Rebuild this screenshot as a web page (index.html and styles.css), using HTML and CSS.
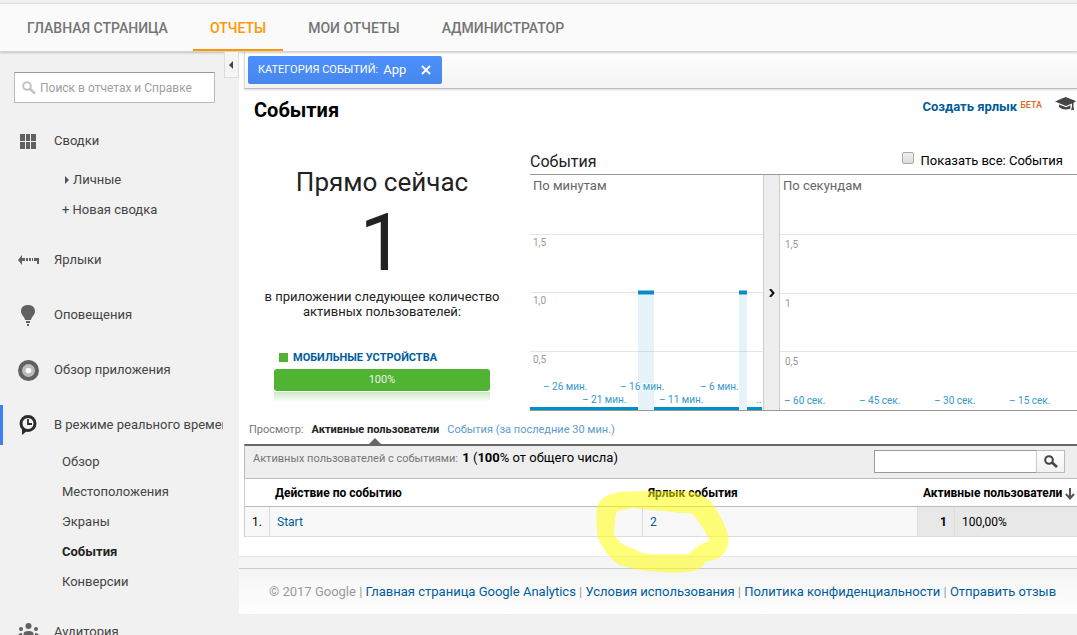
FILE: index.html
```html
<!DOCTYPE html>
<html lang="ru">
<head>
<meta charset="utf-8">
<title>События – Google Analytics</title>
<link rel="stylesheet" href="styles.css">
</head>
<body>
<header class="topbar">
  <nav class="tabs">
    <a class="tab" href="#">ГЛАВНАЯ СТРАНИЦА</a>
    <a class="tab tab-active" href="#">ОТЧЕТЫ</a>
    <a class="tab" href="#">МОИ ОТЧЕТЫ</a>
    <a class="tab" href="#">АДМИНИСТРАТОР</a>
  </nav>
</header>
<div class="layout">
  <aside class="sidebar">
    <button class="collapse" aria-label="Свернуть меню"><svg width="6" height="8" viewBox="0 0 6 8"><path d="M4 0v8L0 4z" fill="#444"/></svg></button>
    <label class="search">
      <svg width="14" height="14" viewBox="0 0 14 14" fill="none" stroke="#c3c3c3"><circle cx="5" cy="5" r="3.8" stroke-width="2"/><path d="M8 8l5 4.5" stroke-width="2.6"/></svg>
      <input type="text" placeholder="Поиск в отчетах и Справке" aria-label="Поиск в отчетах и Справке">
    </label>
    <nav class="menu">
      <a class="item" href="#"><span class="icon"><svg width="16" height="15" viewBox="0 0 16 15" fill="#616161"><path d="M0 0h5v7H0zM6 0h4v7H6zM11 0h5v7h-5zM0 8h5v7H0zM6 8h4v7H6zM11 8h5v7h-5z"/></svg></span>Сводки</a>
      <div class="subs subs-dash">
        <a class="sub" href="#"><svg width="4" height="8" viewBox="0 0 4 8"><path d="M0 0l4 4-4 4z" fill="#555"/></svg>Личные</a>
        <a class="sub sub-new" href="#">+ Новая сводка</a>
      </div>
      <a class="item" href="#"><span class="icon"><svg width="22" height="10" viewBox="0 0 22 10" fill="#616161"><path d="M1 5l4-5v3h3v3H5v4zM9 3h2v3H9zM12 3h2v3h-2zM15 3h1v3h-1zM17 3h5v6h-2V6h-3z"/></svg></span>Ярлыки</a>
      <a class="item" href="#"><span class="icon"><svg width="14" height="21" viewBox="0 0 14 21" fill="#616161"><path d="M4 15C4 12 0 10 0 6.500C0 2 3 0 7 0s7 2 7 6.500C14 10 10 12 10 15zM5 16h4v2H5zM6 19h2v2H6z"/></svg></span>Оповещения</a>
      <a class="item" href="#"><span class="icon"><svg width="22" height="22" viewBox="0 0 22 22"><circle cx="11.500" cy="11.500" r="10.500" fill="#616161"/><circle cx="11.500" cy="11.500" r="6.500" fill="#bdbdbd"/><circle cx="11.500" cy="11.500" r="2.800" fill="#fff"/></svg></span>Обзор приложения</a>
      <a class="item item-active" href="#"><span class="icon"><svg width="18" height="20" viewBox="0 0 18 20"><path d="M3 14v6l5-4z" fill="#2b2b2b"/><circle cx="9" cy="8.500" r="7" fill="#f1f1f1" stroke="#2b2b2b" stroke-width="3"/><path d="M9 4v5h4" fill="none" stroke="#2b2b2b" stroke-width="1.800"/></svg></span><span class="clip">В режиме реального времени</span></a>
      <div class="subs subs-live">
        <a class="sub" href="#">Обзор</a>
        <a class="sub" href="#">Местоположения</a>
        <a class="sub" href="#">Экраны</a>
        <a class="sub sub-active" href="#">События</a>
        <a class="sub" href="#">Конверсии</a>
      </div>
      <a class="item" href="#"><span class="icon"><svg width="22" height="18" viewBox="0 0 22 18" fill="#616161"><circle cx="11.500" cy="3" r="3"/><circle cx="4" cy="6" r="2"/><circle cx="19" cy="6" r="2"/><path d="M6.500 18v-7q0-3 5-3t5 3v7zM1 18v-5q0-3 4-3v8zM22 18v-5q0-3-4-3v8z"/></svg></span>Аудитория</a>
    </nav>
  </aside>
  <main class="main">
    <div class="filters">
      <div class="chip"><span class="chip-name">КАТЕГОРИЯ СОБЫТИЙ:</span><span class="chip-value">App</span><button class="chip-close" aria-label="Удалить"><svg width="10" height="10" viewBox="0 0 10 10"><path d="M1 1l8 8M9 1L1 9" stroke="#fff" stroke-width="2"/></svg></button></div>
    </div>
    <div class="title-row">
      <h1>События</h1>
      <div class="actions">
        <a class="shortcut" href="#">Создать ярлык</a><span class="beta">БЕТА</span>
        <svg class="cap" width="22" height="14" viewBox="0 0 22 14" fill="#444"><path d="M0 4.500L10.500 0 21 4 18.500 6v4l.5 3h-3l1-3V6.500L11 9z"/><path d="M4 7.500v2.500q3 2.500 7 2.500 2.500 0 4.500-1V8.200L11 10.200z"/></svg>
      </div>
    </div>
    <div class="overview">
      <section class="now">
        <div class="now-title">Прямо сейчас</div>
        <div class="now-count">1</div>
        <p class="now-text">в приложении следующее количество активных пользователей:</p>
        <div class="device">
          <div class="legend"><span class="swatch"></span>МОБИЛЬНЫЕ УСТРОЙСТВА</div>
          <div class="bar">100%</div>
          <div class="reflection"></div>
        </div>
      </section>
      <section class="charts">
        <div class="charts-head">
          <h2>События</h2>
          <label class="show-all"><input type="checkbox">Показать все: События</label>
        </div>
        <div class="plots">
          <svg class="plot minutes" height="235">
            <path class="grid" d="M0 59.500H233M0 117.500H233M0 176.500H233"/>
            <g class="area"><path d="M108 119h16v116h-16zM209 119h8v116h-8z"/></g>
            <path class="series" d="M108 117.500h16M209 117.500h8"/>
            <path class="series base" d="M0 233.500h108M124 233.500h85M217 233.500h15"/>
            <text class="caption" x="3" y="15">По минутам</text>
            <g class="ylabel"><text x="3" y="71">1,5</text><text x="3" y="129">1,0</text><text x="3" y="188">0,5</text></g>
            <g class="xlabel"><text x="13" y="215">– 26 мин.</text><text x="52" y="228">– 21 мин.</text><text x="90" y="215">– 16 мин.</text><text x="129" y="228">– 11 мин.</text><text x="170" y="215">– 6 мин.</text><text x="226" y="228">..</text></g>
          </svg>
          <button class="splitter" aria-label="Развернуть"><svg width="6" height="8" viewBox="0 0 6 8"><path d="M1 0l3.500 4L1 8" fill="none" stroke="#111" stroke-width="2"/></svg></button>
          <svg class="plot seconds" height="235">
            <g class="grid"><line x1="0" x2="100%" y1="59.500" y2="59.500"/><line x1="0" x2="100%" y1="118.500" y2="118.500"/><line x1="0" x2="100%" y1="176.500" y2="176.500"/></g>
            <text class="caption" x="3" y="15">По секундам</text>
            <g class="ylabel"><text x="5" y="73">1,5</text><text x="5" y="132">1</text><text x="5" y="190">0,5</text></g>
            <g class="xlabel"><text x="4" y="229">– 60 сек.</text><text x="79" y="229">– 45 сек.</text><text x="154" y="229">– 30 сек.</text><text x="229" y="229">– 15 сек.</text></g>
          </svg>
        </div>
      </section>
    </div>
    <div class="views">
      <span>Просмотр:</span>
      <span class="view-active">Активные пользователи</span>
      <a class="view-link" href="#">События (за последние 30 мин.)</a>
    </div>
    <section class="report">
      <div class="summary">
        <div><span class="summary-name">Активных пользователей с событиями:</span> <b>1</b> (<b>100</b>% от общего числа)</div>
        <form class="find">
          <input type="text" aria-label="Поиск по таблице">
          <button type="button" aria-label="Найти"><svg width="14" height="13" viewBox="0 0 14 13" fill="none" stroke="#444"><circle cx="5" cy="5" r="3.800" stroke-width="2"/><path d="M8 7.500l5 4.500" stroke-width="2.600"/></svg></button>
        </form>
      </div>
      <table>
        <colgroup><col class="c-num"><col class="c-action"><col class="c-label"><col class="c-users"><col></colgroup>
        <thead><tr><th></th><th class="h-action">Действие по событию</th><th class="h-label">Ярлык события</th><th class="h-users" colspan="2">Активные пользователи<svg width="10" height="12" viewBox="0 0 10 12"><path d="M5 0v10M1 6l4 4.500L9 6" fill="none" stroke="#555" stroke-width="2"/></svg></th></tr></thead>
        <tbody><tr><td>1.</td><td><a href="#">Start</a></td><td><a href="#">2</a></td><td class="users">1</td><td class="share">100,00%</td></tr></tbody>
      </table>
      <svg class="marker" width="220" height="190" viewBox="0 0 660 570"><path fill="#ff0" fill-opacity=".52" fill-rule="evenodd" d="M150 183L230 180H345Q390 180 425 215Q445 245 455 265Q475 300 475 325Q475 360 450 378Q430 390 405 392Q400 410 370 420Q330 426 280 424Q200 420 150 402Q110 380 85 325Q78 300 80 240Q82 192 150 183ZM155 236Q137 240 136 255L132 310Q150 345 190 352Q210 368 240 370H358Q362 358 385 345Q405 333 420 330Q405 300 395 285Q380 262 365 247L330 246Q270 237 250 238L190 231Z"/></svg>
    </section>
    <footer class="footer">© 2017 Google | <a href="#">Главная страница Google Analytics</a> | <a href="#">Условия использования</a> | <a href="#">Политика конфиденциальности</a> | <a href="#">Отправить отзыв</a></footer>
  </main>
</div>
</body>
</html>
```
FILE: styles.css
```css
* { box-sizing: border-box; }
body {
  margin: 0;
  height: 100vh;
  overflow: hidden;
  background: #f1f1f1;
  color: #222;
  font: 13px/16px Roboto, "Liberation Sans", sans-serif;
}
a { color: #005c9c; text-decoration: none; }
svg { display: block; flex: none; }
button { padding: 0; cursor: pointer; }
h1, h2, p { margin: 0; }

.topbar {
  position: relative;
  margin-top: 3px;
  border-top: 1px solid #ddd;
  border-bottom: 1px solid #d5d5d5;
  background: #fafafa;
  box-shadow: 0 1px 2px rgba(0, 0, 0, .2);
}
.tabs { display: flex; gap: 8px; padding-left: 10px; }
.tab {
  padding: 16px 17px 13px;
  border-bottom: 2px solid transparent;
  color: #757575;
  font-size: 14px;
  font-weight: 500;
}
.tab-active { border-color: #ff9800; color: #ff9800; }

.layout { display: flex; align-items: flex-start; }
.sidebar { position: relative; flex: none; width: 239px; padding-top: 20px; }
.collapse {
  position: absolute;
  top: 0;
  right: 0;
  display: grid;
  place-items: center;
  width: 15px;
  height: 26px;
  border: 1px solid #ddd;
  border-top: 0;
  background: #f5f5f5;
}
.search {
  display: flex;
  align-items: center;
  gap: 4px;
  height: 31px;
  margin: 0 24px 18px 14px;
  padding-left: 7px;
  border: 1px solid #bbb;
  border-top-color: #999;
  background: #fff;
}
.search input { flex: 1; min-width: 0; padding: 0; border: 0; outline: 0; font: 12px/16px Roboto, sans-serif; }
.search input::placeholder { color: #a0a0a0; }
.item { display: flex; align-items: center; height: 40px; margin-bottom: 15px; padding-left: 14px; color: #444; }
.item-active { padding-left: 11px; border-left: 3px solid #4080f0; }
.icon { display: grid; place-items: center; flex: none; width: 28px; margin-right: 12px; }
.clip { width: 169px; overflow: hidden; white-space: nowrap; }
.sub { display: flex; align-items: center; gap: 4px; height: 30px; color: #444; }
.subs { margin-bottom: 15px; }
.subs-dash { margin-top: -11px; padding-left: 65px; }
.sub-new { margin-left: -3px; }
.subs-live { margin-top: -13px; padding-left: 62px; }
.sub-active { color: #222; font-weight: 700; }

.main { flex: 1; min-width: 0; background: #fff; }
.filters {
  margin-left: 5px;
  padding: 4px 3px;
  border-left: 1px solid #ddd;
  border-bottom: 1px solid #bbb;
  background: linear-gradient(#fff, #f3f3f3);
  box-shadow: 0 1px 2px rgba(0, 0, 0, .15);
}
.chip {
  display: inline-flex;
  align-items: center;
  height: 28px;
  padding: 0 11px 0 10px;
  border-radius: 2px;
  background: linear-gradient(#4d90fe, #4787ed);
  color: #fff;
  vertical-align: top;
}
.chip-name { margin-right: 5px; font-size: 11px; }
.chip-close { margin-left: 15px; border: 0; background: none; }

.title-row { display: flex; justify-content: space-between; height: 42px; padding: 9px 0 0 15px; }
h1 { color: #000; font-size: 20px; line-height: 24px; }
.actions { display: flex; align-items: flex-start; }
.shortcut { padding-top: 1px; font-weight: 700; }
.beta { margin: 0 13px 0 3px; color: #dd6b20; font-size: 9px; font-weight: 500; line-height: 14px; }
.cap { margin-top: -1px; }

.overview { display: flex; }
.now { flex: none; width: 286px; padding: 35px 0 0; text-align: center; }
.now-title { font-size: 26px; line-height: 32px; }
.now-count { margin-top: 5px; font-size: 80px; line-height: 80px; }
.now-text { width: 250px; margin: 6px auto 31px; line-height: 15px; }
.device { margin: 0 35px; }
.legend { display: flex; align-items: center; gap: 5px; margin-bottom: 3px; padding-left: 5px; color: #005c9c; font-size: 11px; font-weight: 700; }
.swatch { width: 9px; height: 9px; margin-bottom: 2px; background: #50b432; }
.bar { border-radius: 3px; background: #50b432; color: #eee; font-size: 11px; line-height: 22px; }
.reflection { height: 10px; margin-top: 1px; background: linear-gradient(#cce9c4, #fff); }

.charts { flex: 1; min-width: 0; margin-left: 5px; }
.charts-head { display: flex; justify-content: space-between; height: 43px; padding: 20px 14px 0 0; }
h2 { font-size: 16px; font-weight: 400; line-height: 22px; }
.show-all { display: flex; align-items: flex-start; gap: 7px; color: #000; line-height: 20px; }
.show-all input {
  appearance: none;
  width: 12px;
  height: 12px;
  margin: 1px 0 0;
  border: 1px solid #aaa;
  border-radius: 2px;
  background: linear-gradient(#eee, #ddd);
}
.plots { display: flex; border-top: 1px solid #999; border-bottom: 1px solid #999; }
.plot { font-size: 10px; }
.minutes { width: 233px; }
.seconds { flex: 1; min-width: 0; }
.splitter { display: grid; place-items: center; width: 17px; border: solid #ccc; border-width: 0 1px; background: #eee; }
.caption { fill: #666; font-size: 13px; }
.grid { fill: none; stroke: #e5e5e5; }
.area { fill: #058dc7; fill-opacity: .1; }
.series { fill: none; stroke: #058dc7; stroke-width: 4px; }
.base { stroke-width: 3px; }
.ylabel { fill: #999; }
.xlabel { fill: #3399cc; paint-order: stroke; stroke: #fff; stroke-opacity: .7; stroke-width: 2px; }

.views { display: flex; gap: 8px; padding: 11px 10px 6px; color: #777; font-size: 11px; }
.view-active { position: relative; color: #222; font-weight: 700; }
.view-active::after {
  content: "";
  position: absolute;
  bottom: -6px;
  left: 50%;
  margin-left: -6px;
  border: 6px solid transparent;
  border-top: 0;
  border-bottom-color: #666;
}
.view-link { color: #5c9ccc; }

.report { position: relative; margin-left: 5px; padding-bottom: 19px; }
.summary {
  display: flex;
  justify-content: space-between;
  height: 34px;
  padding: 4px 12px 0 8px;
  border-top: 2px solid #666;
  border-left: 1px solid #bbb;
  background: #eee;
  color: #000;
}
.summary-name { margin-right: 1px; color: #777; font-size: 11px; }
.find { display: flex; height: 23px; }
.find input { width: 163px; border: 1px solid #999; border-right-color: #ccc; outline: 0; }
.find button { display: grid; place-items: center; width: 28px; border: 1px solid #bbb; border-left: 0; background: linear-gradient(#fff, #f1f1f1); }
table { width: 100%; table-layout: fixed; border-collapse: separate; border-spacing: 0; border-left: 1px solid #ccc; border-top: 1px solid #bbb; color: #000; font-size: 12px; }
.c-num { width: 25px; }
.c-action { width: 373px; }
.c-label { width: 275px; }
.c-users { width: 37px; }
th { height: 28px; padding: 0 5px; border-bottom: 1px solid #bbb; text-align: left; white-space: nowrap; }
.h-users svg { display: inline-block; margin-left: 3px; vertical-align: -3px; }
td { height: 30px; padding: 0 7px; border-right: 1px solid #ddd; border-bottom: 1px solid #ddd; background: #f8f8f8; }
td.users { background: #e8e8e8; text-align: right; font-weight: 700; }
td.share { border-right: 0; background: #e8e8e8; }
.marker { position: absolute; top: -13px; left: 326px; pointer-events: none; }

.footer {
  margin-top: 12px;
  padding: 15px 0 14px 30px;
  border-top: 1px solid #ccc;
  background: linear-gradient(#f4f4f4, #fff);
  box-shadow: 0 -11px #f5f5f5, 0 -12px #e8e8e8;
  color: #999;
  white-space: nowrap;
}
```
